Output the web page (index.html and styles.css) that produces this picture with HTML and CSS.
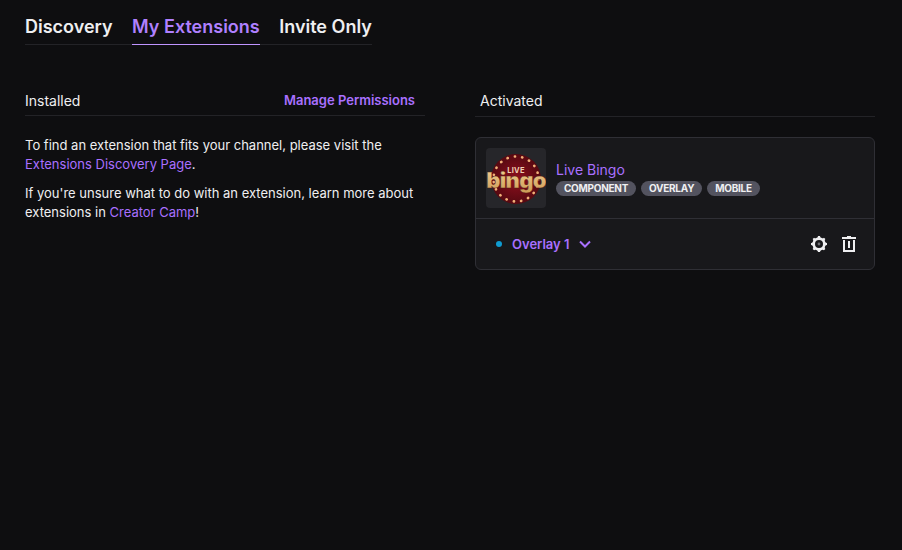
FILE: index.html
```html
<!DOCTYPE html>
<html lang="en">
<head>
    <meta charset="UTF-8">
    <title>Extensions</title>
    <link rel="stylesheet" href="styles.css">
</head>
<body>
    <div class="tabs">
        <a class="tab">Discovery</a>
        <a class="tab tab-active">My Extensions</a>
        <a class="tab">Invite Only</a>
    </div>

    <div class="columns">
        <div class="column">
            <div class="section-head">
                <span>Installed</span>
                <a class="manage-link">Manage Permissions</a>
            </div>
            <p class="copy">To find an extension that fits your channel, please visit the <a class="link">Extensions Discovery Page</a>.</p>
            <p class="copy">If you're unsure what to do with an extension, learn more about extensions in <a class="link">Creator Camp</a>!</p>
        </div>

        <div class="column">
            <div class="section-head section-head-activated">
                <span>Activated</span>
            </div>
            <div class="card">
                <div class="card-top">
                    <div class="logo">
                        <svg width="60" height="60" viewBox="0 0 60 60">
                            <defs>
                                <radialGradient id="disc">
                                    <stop offset="0" stop-color="#8f0f1e"/>
                                    <stop offset="1" stop-color="#560911"/>
                                </radialGradient>
                                <linearGradient id="gold" x1="0" y1="0" x2="0" y2="1">
                                    <stop offset="0" stop-color="#f4d397"/>
                                    <stop offset="1" stop-color="#cc9a55"/>
                                </linearGradient>
                            </defs>
                            <circle cx="30" cy="31" r="25" fill="url(#disc)"/>
                            <circle cx="30" cy="31" r="22.5" fill="none" stroke="#f2b078" stroke-width="2.6" stroke-linecap="round" stroke-dasharray="0.2 7.24"/>
                            <text class="logo-live" x="30" y="25" text-anchor="middle">LIVE</text>
                            <text class="logo-bingo" x="30" y="40" text-anchor="middle" fill="url(#gold)">bingo</text>
                        </svg>
                    </div>
                    <div class="card-info">
                        <a class="card-title">Live Bingo</a>
                        <div class="pills">
                            <span class="pill">COMPONENT</span>
                            <span class="pill">OVERLAY</span>
                            <span class="pill">MOBILE</span>
                        </div>
                    </div>
                </div>
                <div class="card-bottom">
                    <span class="status-dot"></span>
                    <a class="overlay-select">Overlay 1</a>
                    <svg class="chevron" width="14" height="9" viewBox="0 0 14 9">
                        <path d="M1 1.5 L6 6.5 L11 1.5" fill="none" stroke="#a970ff" stroke-width="2"/>
                    </svg>
                    <div class="card-actions">
                        <svg width="20" height="20" viewBox="0 0 20 20">
                            <path fill="#efeff1" fill-rule="evenodd" d="M9 2h2a2.01 2.01 0 001.235 1.855l.53.22a2.01 2.01 0 002.185-.439l1.414 1.414a2.01 2.01 0 00-.439 2.185l.22.53A2.01 2.01 0 0018 9v2a2.01 2.01 0 00-1.855 1.235l-.22.53a2.01 2.01 0 00.44 2.185l-1.415 1.414a2.01 2.01 0 00-2.184-.439l-.531.22A2.01 2.01 0 0011 18H9a2.01 2.01 0 00-1.235-1.854l-.53-.22a2.009 2.009 0 00-2.185.438L3.636 14.95a2.009 2.009 0 00.438-2.184l-.22-.531A2.01 2.01 0 002 11V9c.809 0 1.54-.487 1.854-1.235l.22-.53a2.009 2.009 0 00-.438-2.185L5.05 3.636a2.01 2.01 0 002.185.438l.53-.22A2.01 2.01 0 009 2zM6 10a4 4 0 108 0 4 4 0 00-8 0z"/>
                            <circle cx="10" cy="10" r="1.4" fill="#6b6b70"/>
                        </svg>
                        <svg width="20" height="20" viewBox="0 0 20 20">
                            <path fill="#efeff1" d="M8 2h4v1h5v2H3V3h5V2zM4 6h2v10h8V6h2v12H4V6zM9 7h2v7H9V7z"/>
                        </svg>
                    </div>
                </div>
            </div>
        </div>
    </div>
</body>
</html>
```

FILE: styles.css
```css
body {
    margin: 0;
    padding: 0 27px 0 25px;
    min-height: 550px;
    box-sizing: border-box;
    background-color: #0e0e10;
    color: #efeff1;
    font-family: 'Inter', sans-serif;
    font-size: 14px;
    line-height: 19px;
    overflow: hidden;
}

.tabs {
    display: inline-flex;
    gap: 19.5px;
    height: 45px;
    box-sizing: border-box;
    border-bottom: 1px solid #232327;
}

.tab {
    display: block;
    height: 45px;
    box-sizing: border-box;
    padding-top: 15px;
    font-size: 18px;
    line-height: 24px;
    font-weight: 600;
    color: #efeff1;
}

.tab-active {
    color: #b080ff;
    border-bottom: 1px solid #bf94ff;
}

.columns {
    display: flex;
    gap: 50px;
    margin-top: 41px;
}

.column {
    width: 400px;
}

.section-head {
    display: flex;
    justify-content: space-between;
    align-items: center;
    height: 29px;
    padding-right: 10px;
    border-bottom: 1px solid #232327;
    margin-bottom: 20px;
}

.section-head-activated {
    padding: 0 0 1px 5px;
}

.manage-link {
    font-size: 13px;
    font-weight: 600;
    color: #a970ff;
    margin-top: -1px;
}

.copy {
    margin: 0 0 10px;
    font-size: 13px;
}

.link {
    color: #a970ff;
}

.card {
    background-color: #18181b;
    border: 1px solid #2f2f35;
    border-radius: 6px;
}

.card-top {
    display: flex;
    align-items: center;
    gap: 10px;
    padding: 10px;
    border-bottom: 1px solid #2f2f35;
}

.logo {
    width: 60px;
    height: 60px;
    background-color: #26262a;
    border-radius: 4px;
}

.logo-live {
    font-family: 'Inter', sans-serif;
    font-size: 7.5px;
    font-weight: 700;
    letter-spacing: 0.3px;
    fill: #f0d0b4;
}

.logo-bingo {
    font-family: 'Inter', sans-serif;
    font-size: 22px;
    font-weight: 900;
    letter-spacing: -0.7px;
    stroke: #4a1a10;
    stroke-width: 0.3px;
}

.card-title {
    display: block;
    color: #a970ff;
    line-height: 19px;
    margin-bottom: 2px;
}

.pills {
    display: flex;
    gap: 5px;
}

.pill {
    background-color: #53535f;
    border-radius: 8px;
    height: 15px;
    padding: 0 8px;
    font-size: 10px;
    line-height: 15px;
    font-weight: 700;
    letter-spacing: -0.28px;
    color: #efeff1;
}

.card-bottom {
    display: flex;
    align-items: center;
    height: 50px;
    padding: 0 15px 0 20px;
}

.status-dot {
    width: 6px;
    height: 6px;
    border-radius: 50%;
    background-color: #0f9bd1;
    margin-right: 10px;
}

.overlay-select {
    font-size: 13px;
    font-weight: 600;
    color: #a970ff;
    margin-right: 9px;
}

.card-actions {
    display: flex;
    gap: 10px;
    margin-left: auto;
}
```
